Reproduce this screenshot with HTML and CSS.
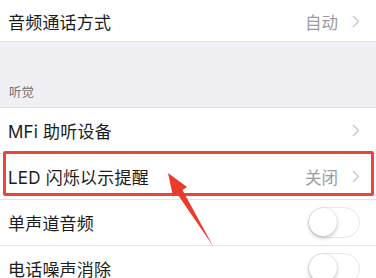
FILE: index.html
```html
<!DOCTYPE html>
<html lang="zh">
<head>
    <meta charset="UTF-8">
    <title>辅助功能</title>
    <link rel="stylesheet" href="styles.css">
</head>
<body>
    <div class="screen">
        <div class="row first">
            <span class="label">音频通话方式</span>
            <span class="value">自动</span>
            <svg class="chevron" viewBox="0 0 8 13"><path d="M1 1l5.5 5.5L1 12"/></svg>
        </div>

        <div class="section-head">听觉</div>

        <div class="row">
            <span class="label">MFi 助听设备</span>
            <svg class="chevron" viewBox="0 0 8 13"><path d="M1 1l5.5 5.5L1 12"/></svg>
        </div>
        <div class="row">
            <span class="label">LED 闪烁以示提醒</span>
            <span class="value">关闭</span>
            <svg class="chevron" viewBox="0 0 8 13"><path d="M1 1l5.5 5.5L1 12"/></svg>
        </div>
        <div class="row">
            <span class="label">单声道音频</span>
            <span class="toggle"><span class="knob"></span></span>
        </div>
        <div class="row">
            <span class="label">电话噪声消除</span>
            <span class="toggle"><span class="knob"></span></span>
        </div>

        <!-- annotation drawn over the screenshot -->
        <div class="highlight"></div>
        <svg class="arrow" viewBox="0 0 376 278">
            <polygon points="168,173 187,187 182.5,190 213,246 177,193.5 173,196.5"/>
        </svg>
    </div>
</body>
</html>
```

FILE: styles.css
```css
* {
    margin: 0;
    padding: 0;
    box-sizing: border-box;
}

html, body {
    width: 100%;
    height: 100%;
    background: #fff;
    overflow: hidden;
}

.screen {
    position: relative;
    width: 376px;
    height: 278px;
    overflow: hidden;
    font-family: "Inter", "Noto Sans CJK SC", sans-serif;
    color: #1c1c1e;
}

.row {
    height: 46px;
    display: flex;
    align-items: center;
    padding: 0 16px 0 8px;
    background: #fff;
    border-bottom: 1px solid #e4e4e8;
    font-size: 17px;
}

.row.first {
    height: 42px;
    padding-top: 2px;
}

.row:last-child {
    border-bottom: none;
}

.label {
    flex: 1;
    letter-spacing: 0.2px;
}

.value {
    color: #9a9aa0;
    font-size: 16.5px;
    margin-right: 14px;
}

.chevron {
    width: 8px;
    height: 13px;
    fill: none;
    stroke: #c4c4c9;
    stroke-width: 1.3;
}

.section-head {
    height: 66px;
    background: #efeff4;
    display: flex;
    align-items: flex-end;
    padding: 0 0 6px 9px;
    font-size: 12.5px;
    color: #707075;
    border-bottom: 1px solid #e4e4e8;
}

.toggle {
    width: 52px;
    height: 31px;
    border-radius: 16px;
    border: 1.5px solid #e6e6ea;
    background: #fff;
    position: relative;
}

.knob {
    position: absolute;
    left: 0;
    top: 0;
    width: 28px;
    height: 28px;
    border-radius: 50%;
    background: #fff;
    box-shadow: 0 2px 4px rgba(0, 0, 0, 0.22), 0 0 1px rgba(0, 0, 0, 0.2);
}

.highlight {
    position: absolute;
    left: 3px;
    top: 151px;
    width: 371px;
    height: 45px;
    border: 3px solid #e8463a;
    border-radius: 2px;
}

.arrow {
    position: absolute;
    left: 0;
    top: 0;
    width: 376px;
    height: 278px;
    fill: #ec3b2a;
}
```
